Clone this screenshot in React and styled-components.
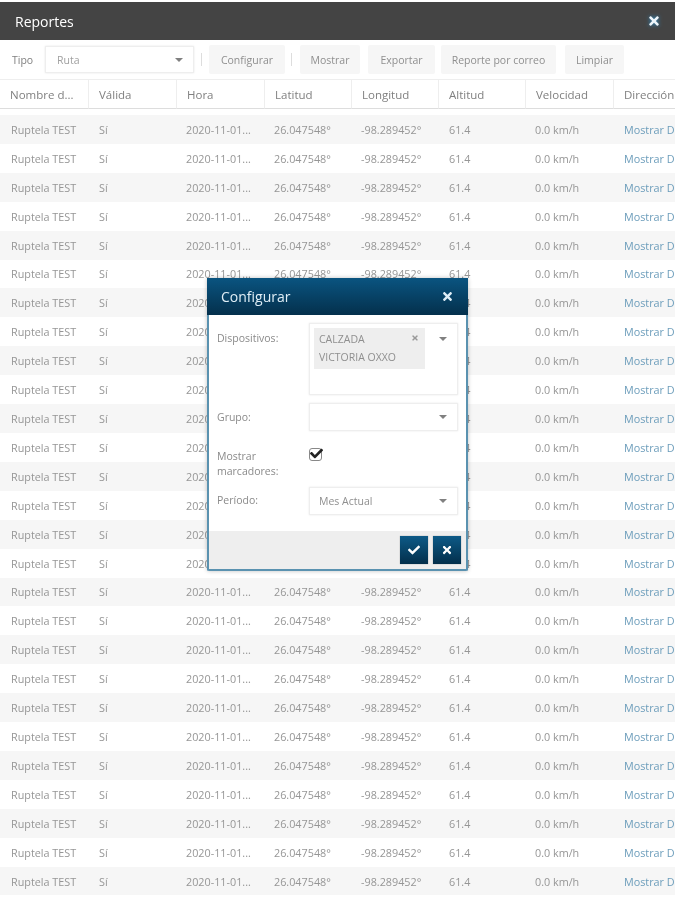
import React from "react";
import styled, { createGlobalStyle } from "styled-components";
import { FaCheck, FaTimes } from "react-icons/fa";

const GlobalStyle = createGlobalStyle`
  html, body { margin: 0; padding: 0; background: #fff; }
  body { font-family: "Open Sans", "Liberation Sans", sans-serif; color: #808080; }
`;

const Page = styled.div`
  position: relative;
  width: 675px;
  height: 900px;
  overflow: hidden;
  background: #fff;
  padding-top: 2px;
  box-sizing: border-box;
  filter: blur(0.5px);
`;

const TitleBar = styled.div`
  height: 38px;
  background: #444;
  display: flex;
  align-items: center;
  justify-content: space-between;
  padding: 0 14px 0 15px;
  color: #fff;
  font-size: 14px;
`;

const CloseBadge = styled.span`
  display: flex;
  color: #eef6fb;
  filter: drop-shadow(0 0 2px #2f8fc8);
`;

const Toolbar = styled.div`
  height: 39px;
  display: flex;
  align-items: center;
  padding: 0 0 0 12px;
  font-size: 10.5px;
`;

const ToolLabel = styled.span`
  width: 33px;
`;

const ToolSelect = styled.div`
  width: 149px;
  height: 27px;
  box-sizing: border-box;
  border: 1px solid #eee;
  box-shadow: 0 0 2px #e6e6e6;
  display: flex;
  align-items: center;
  justify-content: space-between;
  padding: 0 10px 0 11px;
  margin-right: 7px;
  color: #a0a0a0;
`;

const Caret = styled.span`
  width: 0;
  height: 0;
  border-left: 4px solid transparent;
  border-right: 4px solid transparent;
  border-top: 4px solid #808080;
`;

const Divider = styled.span`
  width: 1px;
  height: 13px;
  background: #ddd;
  margin-right: ${(p) => p.$gap}px;
`;

const ToolButton = styled.div`
  height: 29px;
  width: ${(p) => p.$w}px;
  margin-right: ${(p) => p.$gap}px;
  background: #f6f6f6;
  border-radius: 2px;
  display: flex;
  align-items: center;
  justify-content: center;
  color: #8f8f8f;
`;

const Table = styled.div`
  display: grid;
  grid-template-columns: 89px 88px 88px 87px 87px 87px 88px 61px;
`;

const HeadCell = styled.div`
  height: 30px;
  box-sizing: border-box;
  border-top: 1px solid #eee;
  border-bottom: 1px solid #ddd;
  border-right: ${(p) => (p.$last ? "none" : "1px solid #eee")};
  padding-left: 10px;
  display: flex;
  align-items: center;
  font-size: 11.5px;
  color: #808080;
  white-space: nowrap;
  overflow: hidden;
`;

const Spacer = styled.div`
  grid-column: 1 / -1;
  height: 6px;
`;

const Cell = styled.div`
  height: 28.92px;
  padding-left: ${(p) => p.$pad}px;
  display: flex;
  align-items: center;
  font-size: 10.8px;
  white-space: nowrap;
  overflow: hidden;
  color: ${(p) => (p.$link ? "#6c9dbb" : "#969696")};
  background: ${(p) => (p.$odd ? "#f6f6f6" : "#fff")};
`;

const Modal = styled.div`
  position: absolute;
  left: 207px;
  top: 278px;
  width: 261px;
  height: 293px;
  box-sizing: border-box;
  border: 2px solid #5a92b0;
  border-top: none;
  background: #fff;
  border-radius: 2px;
  box-shadow: 0 0 4px rgba(0, 0, 0, 0.25);
  display: flex;
  flex-direction: column;
`;

const ModalTitle = styled.div`
  height: 37px;
  flex: none;
  margin: 0 -2px;
  background: linear-gradient(#0a5480, #04304c);
  color: #dfeef6;
  display: flex;
  align-items: center;
  justify-content: space-between;
  padding: 0 14px;
  font-size: 14px;
`;

const ModalBody = styled.div`
  flex: 1;
  padding: 8px 8px 0 8px;
  display: grid;
  grid-template-columns: 92px 1fr;
  grid-auto-rows: min-content;
  font-size: 10.5px;
`;

const Label = styled.div`
  padding-top: ${(p) => p.$top}px;
  line-height: 15px;
  color: #8a8a8a;
`;

const Field = styled.div`
  height: ${(p) => p.$h}px;
  margin-bottom: ${(p) => p.$mb}px;
  box-sizing: border-box;
  border: 1px solid #eee;
  box-shadow: 0 0 2px #e8e8e8;
  display: flex;
  align-items: ${(p) => (p.$multi ? "flex-start" : "center")};
  justify-content: space-between;
  padding: ${(p) => (p.$multi ? "4px 10px 0 4px" : "0 10px 0 9px")};
  color: #8f8f8f;
`;

const Chip = styled.div`
  width: 111px;
  height: 41px;
  box-sizing: border-box;
  background: #eee;
  padding: 2px 5px;
  line-height: 18px;
  position: relative;
`;

const ChipClose = styled.span`
  position: absolute;
  right: 6px;
  top: 6px;
  display: flex;
  color: #999;
`;

const CaretSlot = styled.span`
  margin-top: ${(p) => p.$top || 0}px;
  display: flex;
`;

const CheckBox = styled.div`
  width: 13px;
  height: 13px;
  box-sizing: border-box;
  border: 1px solid #888;
  border-radius: 3px;
  position: relative;
  margin: 2px 0 26px;
`;

const CheckMark = styled.span`
  position: absolute;
  left: 0;
  top: -2px;
  display: flex;
  color: #222;
`;

const ModalFooter = styled.div`
  height: 38px;
  flex: none;
  background: #eee;
  display: flex;
  align-items: center;
  justify-content: flex-end;
  gap: 5px;
  padding-right: 5px;
`;

const FooterButton = styled.div`
  width: 28px;
  height: 28px;
  background: linear-gradient(#0d5a87, #032f4b);
  color: #fff;
  display: flex;
  align-items: center;
  justify-content: center;
  box-shadow: 0 0 1px rgba(0, 0, 0, 0.4);
`;

const heads = ["Nombre d...", "Válida", "Hora", "Latitud", "Longitud", "Altitud", "Velocidad", "Dirección"];
const rows = Array.from({ length: 27 }, (_, i) => i);

export default function App() {
  return (
    <Page>
      <GlobalStyle />
      <TitleBar>
        Reportes
        <CloseBadge><FaTimes size={14} /></CloseBadge>
      </TitleBar>
      <Toolbar>
        <ToolLabel>Tipo</ToolLabel>
        <ToolSelect>Ruta<Caret /></ToolSelect>
        <Divider $gap={7} />
        <ToolButton $w={76} $gap={6}>Configurar</ToolButton>
        <Divider $gap={8} />
        <ToolButton $w={60} $gap={8}>Mostrar</ToolButton>
        <ToolButton $w={67} $gap={6}>Exportar</ToolButton>
        <ToolButton $w={115} $gap={9}>Reporte por correo</ToolButton>
        <ToolButton $w={59} $gap={0}>Limpiar</ToolButton>
      </Toolbar>
      <Table>
        {heads.map((h, i) => (
          <HeadCell key={h} $last={i === heads.length - 1}>{h}</HeadCell>
        ))}
        <Spacer />
        {rows.map((r) => (
          <React.Fragment key={r}>
            <Cell $odd={r % 2 === 0} $pad={11}>Ruptela TEST</Cell>
            <Cell $odd={r % 2 === 0} $pad={10}>Sí</Cell>
            <Cell $odd={r % 2 === 0} $pad={9}>2020-11-01...</Cell>
            <Cell $odd={r % 2 === 0} $pad={9}>26.047548°</Cell>
            <Cell $odd={r % 2 === 0} $pad={9}>-98.289452°</Cell>
            <Cell $odd={r % 2 === 0} $pad={10}>61.4</Cell>
            <Cell $odd={r % 2 === 0} $pad={9}>0.0 km/h</Cell>
            <Cell $odd={r % 2 === 0} $pad={10} $link>Mostrar Dirección</Cell>
          </React.Fragment>
        ))}
      </Table>
      <Modal>
        <ModalTitle>
          Configurar
          <FaTimes size={13} />
        </ModalTitle>
        <ModalBody>
          <Label $top={8}>Dispositivos:</Label>
          <Field $h={72} $mb={8} $multi>
            <Chip>
              CALZADA<br />VICTORIA OXXO
              <ChipClose><FaTimes size={8} /></ChipClose>
            </Chip>
            <CaretSlot $top={9}><Caret /></CaretSlot>
          </Field>
          <Label $top={7}>Grupo:</Label>
          <Field $h={28} $mb={15}><span /><Caret /></Field>
          <Label $top={3}>Mostrar<br />marcadores:</Label>
          <CheckBox><CheckMark><FaCheck size={13} /></CheckMark></CheckBox>
          <Label $top={6}>Período:</Label>
          <Field $h={28} $mb={0}>Mes Actual<Caret /></Field>
        </ModalBody>
        <ModalFooter>
          <FooterButton><FaCheck size={12} /></FooterButton>
          <FooterButton><FaTimes size={12} /></FooterButton>
        </ModalFooter>
      </Modal>
    </Page>
  );
}
